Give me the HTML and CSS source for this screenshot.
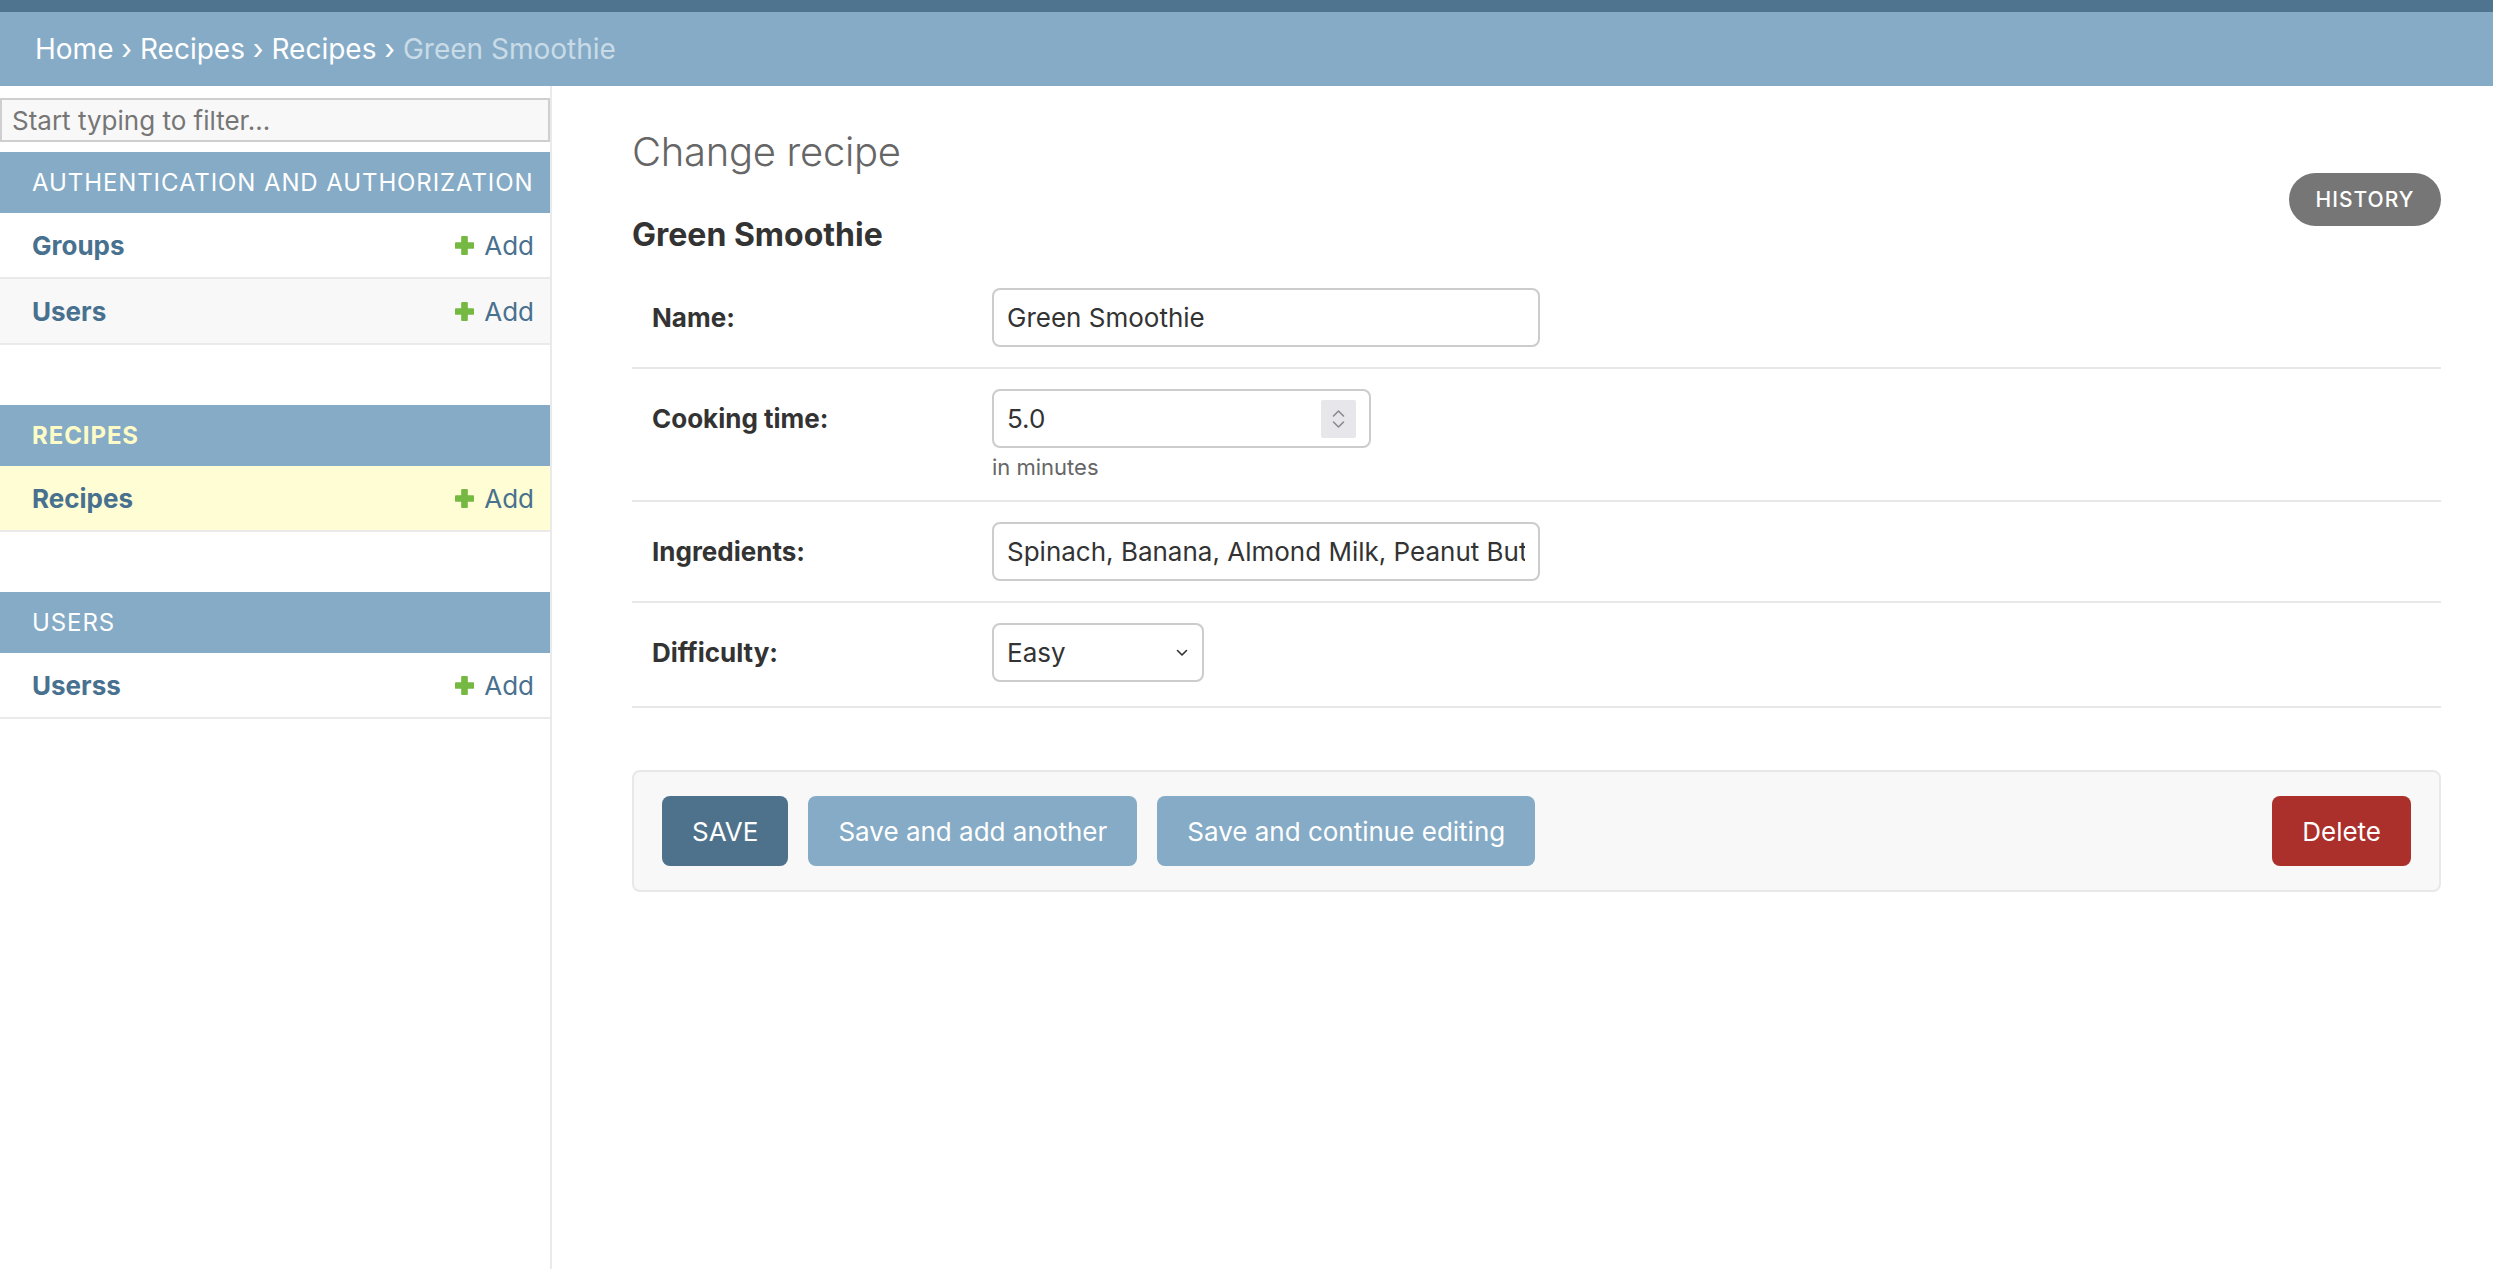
FILE: index.html
```html
<!DOCTYPE html>
<html lang="en">
<head>
<meta charset="utf-8">
<title>Change recipe | Django site admin</title>
<link rel="stylesheet" href="styles.css">
</head>
<body>
<div class="topbar"></div>
<nav class="breadcrumbs">
  <a href="#">Home</a> <span class="sep">&rsaquo;</span> <a href="#">Recipes</a> <span class="sep">&rsaquo;</span> <a href="#">Recipes</a> <span class="sep">&rsaquo;</span> <span class="current">Green Smoothie</span>
</nav>
<div class="main">
  <aside class="sidebar">
    <input class="nav-filter" type="search" placeholder="Start typing to filter...">
    <div class="module">
      <div class="caption">Authentication and Authorization</div>
      <div class="row"><a class="model" href="#">Groups</a><a class="addlink" href="#"><svg class="plus" viewBox="0 0 20 20"><rect x="6.5" y="0" width="7" height="20" rx="1"/><rect x="0" y="6.5" width="20" height="7" rx="1"/></svg>Add</a></div>
      <div class="row alt"><a class="model" href="#">Users</a><a class="addlink" href="#"><svg class="plus" viewBox="0 0 20 20"><rect x="6.5" y="0" width="7" height="20" rx="1"/><rect x="0" y="6.5" width="20" height="7" rx="1"/></svg>Add</a></div>
    </div>
    <div class="module current-app">
      <div class="caption">Recipes</div>
      <div class="row selected"><a class="model" href="#">Recipes</a><a class="addlink" href="#"><svg class="plus" viewBox="0 0 20 20"><rect x="6.5" y="0" width="7" height="20" rx="1"/><rect x="0" y="6.5" width="20" height="7" rx="1"/></svg>Add</a></div>
    </div>
    <div class="module">
      <div class="caption">Users</div>
      <div class="row"><a class="model" href="#">Userss</a><a class="addlink" href="#"><svg class="plus" viewBox="0 0 20 20"><rect x="6.5" y="0" width="7" height="20" rx="1"/><rect x="0" y="6.5" width="20" height="7" rx="1"/></svg>Add</a></div>
    </div>
  </aside>
  <main class="content">
    <div class="content-head">
      <div>
        <h1>Change recipe</h1>
        <h2>Green Smoothie</h2>
      </div>
      <a class="history" href="#">History</a>
    </div>
    <form class="change-form">
      <div class="fieldset">
        <div class="form-row">
          <div class="field-line">
            <label>Name:</label>
            <input class="text-input w-text" type="text" value="Green Smoothie">
          </div>
        </div>
        <div class="form-row">
          <div class="field-line">
            <label>Cooking time:</label>
            <div class="number-box">
              <input class="bare-input" type="text" value="5.0">
              <svg class="spinner" viewBox="0 0 35 38"><rect width="35" height="38" rx="2" fill="#e7e7eb"/><path d="M12.5 16 L17.5 11 L22.5 16 M12.5 22 L17.5 27 L22.5 22" fill="none" stroke="#8a8a8e" stroke-width="1.6" stroke-linecap="round" stroke-linejoin="round"/></svg>
            </div>
          </div>
          <div class="help">in minutes</div>
        </div>
        <div class="form-row">
          <div class="field-line">
            <label>Ingredients:</label>
            <input class="text-input w-text" type="text" value="Spinach, Banana, Almond Milk, Peanut Butter, Honey">
          </div>
        </div>
        <div class="form-row last">
          <div class="field-line">
            <label>Difficulty:</label>
            <div class="select-box">
              <select class="bare-select"><option>Easy</option><option>Medium</option><option>Hard</option></select>
              <svg class="chev" viewBox="0 0 12 8"><path d="M1.5 1.5 L6 6 L10.5 1.5" fill="none" stroke="#333" stroke-width="1.6" stroke-linecap="round" stroke-linejoin="round"/></svg>
            </div>
          </div>
        </div>
      </div>
      <div class="submit-row">
        <button class="btn btn-default" type="button">SAVE</button>
        <button class="btn" type="button">Save and add another</button>
        <button class="btn" type="button">Save and continue editing</button>
        <a class="btn deletelink" href="#">Delete</a>
      </div>
    </form>
  </main>
</div>
</body>
</html>
```
FILE: styles.css
```css
* { box-sizing: border-box; }
html, body { margin: 0; padding: 0; }
body {
  font-family: Inter, "Noto Sans", "Liberation Sans", sans-serif;
  color: #333;
  background: #fff;
}
a { text-decoration: none; }

.topbar { height: 12px; background: #4e7490; }

.breadcrumbs {
  height: 74px;
  line-height: 74px;
  background: #85abc6;
  padding: 0 35px;
  font-size: 28px;
  color: #fff;
  white-space: nowrap;
}
.breadcrumbs a { color: #fff; }
.breadcrumbs .sep { color: #fff; }
.breadcrumbs .current { color: #c9dbe7; }

.main { display: flex; min-height: calc(100vh - 86px); }

.sidebar {
  width: 552px;
  flex: none;
  border-right: 2px solid #eaeaea;
  padding-top: 12px;
}
.nav-filter {
  display: block;
  width: 100%;
  height: 44px;
  margin: 0 0 10px;
  border: 2px solid #cfcfcf;
  background: #f8f8f8;
  font-family: Inter, "Noto Sans", sans-serif;
  font-size: 26px;
  padding: 0 10px;
  color: #333;
  outline: none;
}
.nav-filter::placeholder { color: #767676; }

.module { margin-bottom: 60px; }
.caption {
  height: 61px;
  background: #85abc6;
  color: #fff;
  font-size: 24px;
  letter-spacing: 0.9px;
  text-transform: uppercase;
  white-space: nowrap;
  padding: 0 32px;
  display: flex;
  align-items: center;
}
.current-app .caption { color: #fdfcc6; font-weight: 700; }

.row {
  height: 66px;
  border-bottom: 2px solid #eaeaea;
  display: flex;
  align-items: center;
  justify-content: space-between;
  padding: 0 16px 0 32px;
  font-size: 26px;
}
.row.alt { background: #f8f8f8; }
.row.selected { background: #fefdd4; }
.model { color: #48718f; font-weight: 700; }
.addlink { color: #48718f; display: flex; align-items: center; }
.plus { width: 19px; height: 19px; fill: #75b842; margin-right: 10px; }

.content {
  flex: 1;
  min-width: 0;
  padding: 40px 52px 40px 80px;
}
.content-head {
  display: flex;
  justify-content: space-between;
  align-items: flex-start;
}
h1 {
  margin: 2px 0 40px;
  font-size: 40px;
  line-height: 48px;
  letter-spacing: -0.3px;
  font-weight: 300;
  color: #666;
}
h2 {
  margin: 0 0 14px;
  font-size: 32px;
  line-height: 38px;
  font-weight: 700;
  color: #333;
}
.history {
  margin-top: 47px;
  height: 53px;
  width: 152px;
  border-radius: 27px;
  background: #767676;
  color: #fff;
  font-size: 21px;
  font-weight: 500;
  letter-spacing: 1px;
  text-transform: uppercase;
  display: flex;
  align-items: center;
  justify-content: center;
}

.form-row {
  padding: 20px;
  border-bottom: 2px solid #e8e8e8;
}
.form-row.last { padding-bottom: 24px; }
.field-line { display: flex; align-items: center; }
.field-line label {
  flex: none;
  width: 340px;
  padding-right: 20px;
  font-size: 26px;
  font-weight: 700;
  color: #333;
}
.text-input {
  height: 59px;
  border: 2px solid #cccccc;
  border-radius: 8px;
  padding: 0 13px;
  font-family: Inter, "Noto Sans", sans-serif;
  font-size: 26px;
  color: #333;
  background: #fff;
  outline: none;
}
.w-text { width: 548px; }

.number-box {
  width: 379px;
  height: 59px;
  border: 2px solid #cccccc;
  border-radius: 8px;
  display: flex;
  align-items: center;
  padding: 0 13px 0 13px;
}
.bare-input {
  flex: 1;
  min-width: 0;
  border: none;
  outline: none;
  padding: 0;
  font-family: Inter, "Noto Sans", sans-serif;
  font-size: 26px;
  color: #333;
  background: transparent;
}
.spinner { width: 35px; height: 38px; flex: none; }

.select-box {
  width: 212px;
  height: 59px;
  border: 2px solid #cccccc;
  border-radius: 8px;
  display: flex;
  align-items: center;
  padding: 0 14px 0 13px;
}
.bare-select {
  flex: 1;
  min-width: 0;
  appearance: none;
  -webkit-appearance: none;
  border: none;
  outline: none;
  padding: 0;
  background: transparent;
  font-family: Inter, "Noto Sans", sans-serif;
  font-size: 26px;
  color: #333;
}
.chev { width: 12px; height: 8px; flex: none; }

.help {
  padding-left: 340px;
  margin-top: 6px;
  font-size: 22px;
  line-height: 26px;
  color: #666;
}

.submit-row {
  margin-top: 62px;
  display: flex;
  gap: 20px;
  padding: 24px 28px;
  background: #f8f8f8;
  border: 2px solid #e8e8e8;
  border-radius: 8px;
}
.btn {
  height: 70px;
  padding: 0 30px;
  border: none;
  border-radius: 8px;
  font-family: Inter, "Noto Sans", sans-serif;
  font-size: 26px;
  color: #fff;
  background: #85abc6;
  display: flex;
  align-items: center;
  cursor: pointer;
}
.btn-default { background: #4e728c; }
.deletelink { margin-left: auto; background: #ab302b; }
```
